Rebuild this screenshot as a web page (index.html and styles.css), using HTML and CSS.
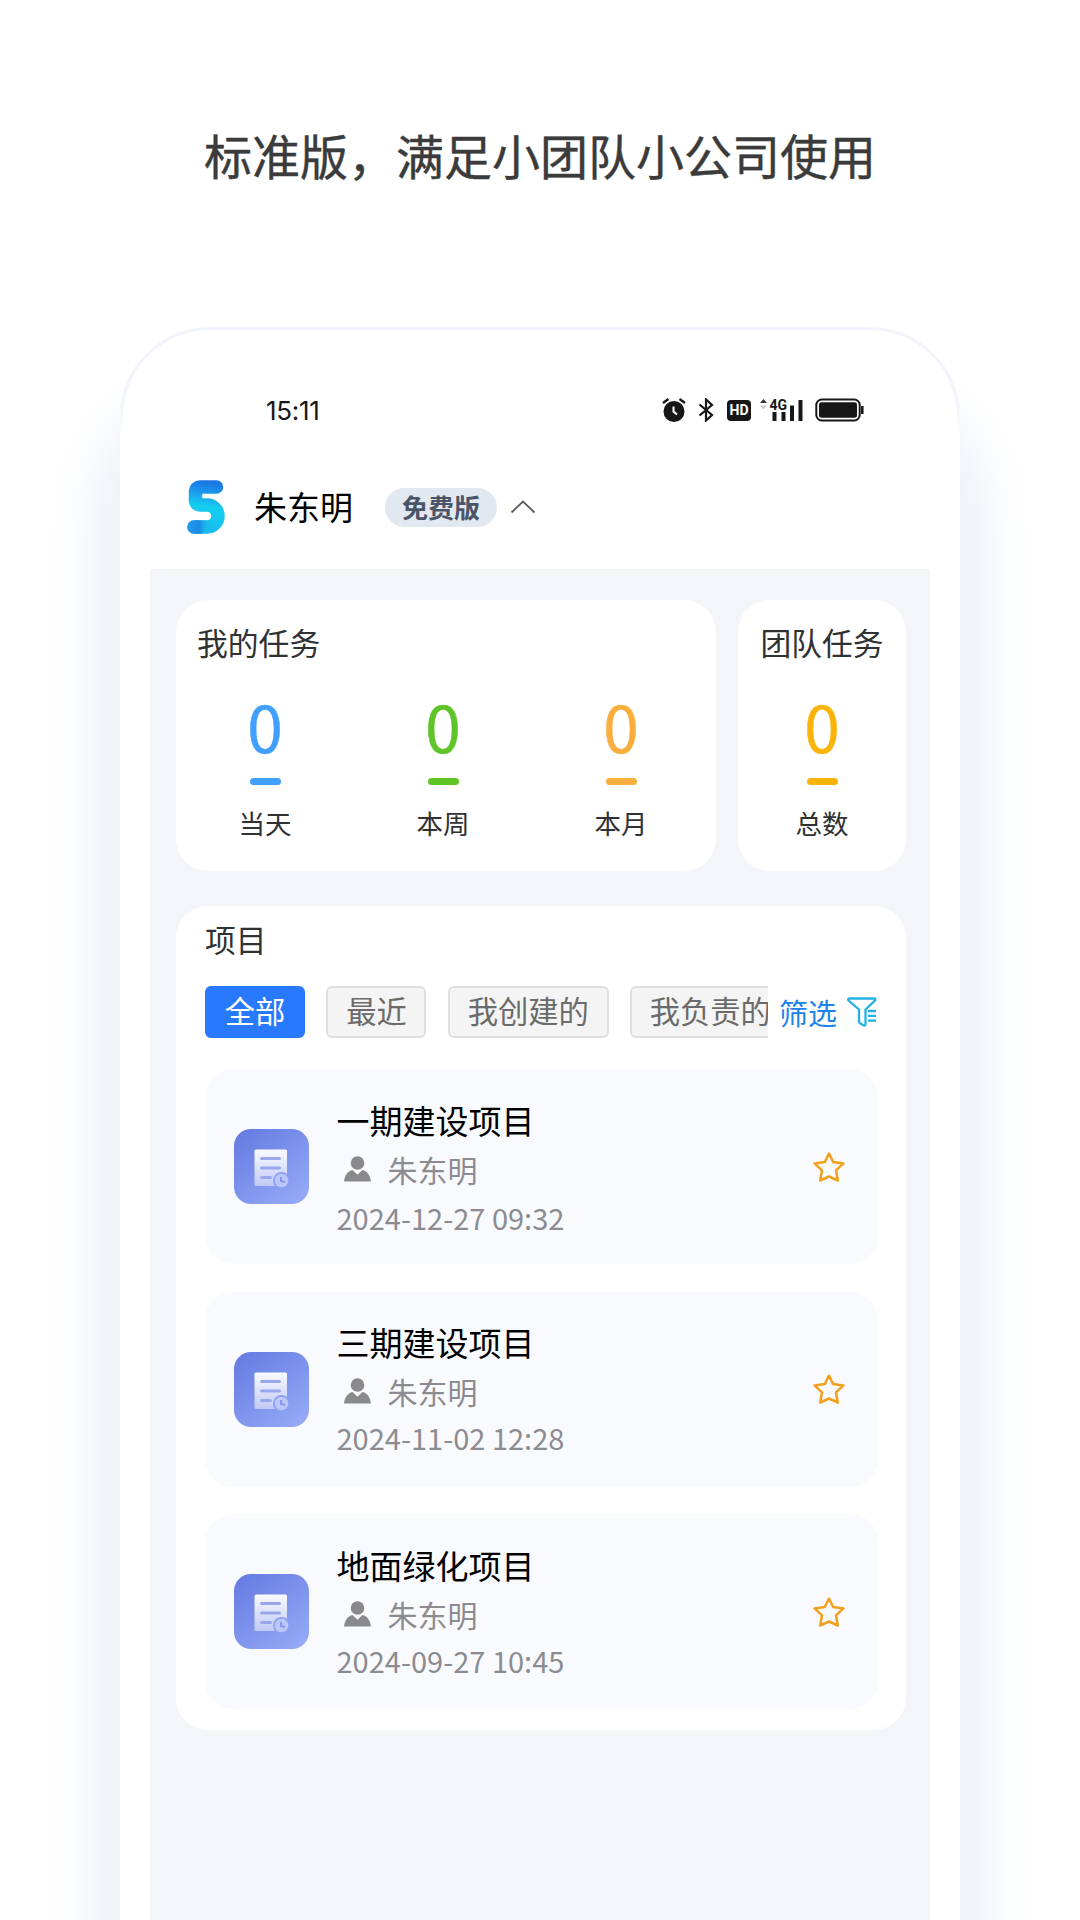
FILE: index.html
```html
<!DOCTYPE html>
<html lang="zh-CN">

<head>
    <meta charset="UTF-8">
    <meta name="viewport" content="width=device-width, initial-scale=1.0">
    <title>标准版</title>
    <link rel="stylesheet" href="styles.css">
</head>

<body>
    <!-- shared icons -->
    <svg class="sprite" width="0" height="0">
        <defs>
            <linearGradient id="fileBg" x1="0" y1="0" x2="0.8" y2="1">
                <stop offset="0" stop-color="#6379e0" />
                <stop offset="1" stop-color="#94a8f6" />
            </linearGradient>
            <linearGradient id="paper" x1="0" y1="0" x2="0" y2="1">
                <stop offset="0" stop-color="#fafbff" />
                <stop offset="1" stop-color="#c0c9f6" />
            </linearGradient>
            <linearGradient id="logoBg" gradientUnits="userSpaceOnUse" x1="26" y1="0" x2="18" y2="54">
                <stop offset="0.05" stop-color="#1b76e4" />
                <stop offset="0.25" stop-color="#1c98ee" />
                <stop offset="0.5" stop-color="#14cdee" />
                <stop offset="0.8" stop-color="#18c3ee" />
                <stop offset="1" stop-color="#16b8ec" />
            </linearGradient>
            <linearGradient id="logoTail" x1="0" y1="0" x2="1" y2="0">
                <stop offset="0" stop-color="#1f9cee" />
                <stop offset="0.5" stop-color="#1a88e2" />
                <stop offset="1" stop-color="#1ac0ec" stop-opacity="0" />
            </linearGradient>
        </defs>
        <symbol id="file" viewBox="0 0 75 75">
            <rect width="75" height="75" rx="17" fill="url(#fileBg)" />
            <rect x="20.500" y="20.500" width="32.500" height="36.500" rx="1.500" fill="url(#paper)" />
            <path d="M27.500 29.500h18M27.500 39h18M27.500 48.500h9" stroke="#9aa6ec" stroke-width="3" stroke-linecap="round" />
            <circle cx="47.500" cy="51.500" r="8.500" fill="#8da0f0" />
            <circle cx="47.500" cy="51.500" r="6.800" fill="#bcc7f9" />
            <path d="M47 48v4l4 1" fill="none" stroke="#8498ee" stroke-width="2" />
        </symbol>
        <symbol id="person" viewBox="0 0 27 26">
            <circle cx="13.500" cy="7" r="6.800" />
            <path d="M0 25.500C.8 19.500 3.500 15 8.500 14l5 4.800 5-4.800c5 1 7.700 5.500 8.500 11.500z" />
        </symbol>
        <symbol id="star" viewBox="0 0 32 32">
            <path d="M16 2.500l4.200 8.600 10.200 1.300-7.400 6.900 1.800 10.200L16 25.500l-8.800 4 1.800-10.200-7.400-6.900 10.200-1.300z" />
        </symbol>
    </svg>

    <h1 class="headline">标准版，满足小团队小公司使用</h1>

    <div class="phone">
        <div class="status-bar">
            <span class="time">15:11</span>
            <div class="status-icons">
                <svg width="24" height="24" viewBox="0 0 24 24">
                    <circle cx="12" cy="13.500" r="10.500" fill="#171717" />
                    <path d="M1 5l5.500-4M23 5l-5.500-4" stroke="#171717" stroke-width="2.400" />
                    <path d="M11.500 8.500v5l3.500 3" fill="none" stroke="#fff" stroke-width="2" />
                </svg>
                <svg width="16" height="24" viewBox="0 0 16 24">
                    <path d="M1.500 6.500L14 17l-6 5.500v-21L14 7 1.500 17.500" fill="none" stroke="#171717" stroke-width="2.200" />
                </svg>
                <span class="hd">HD</span>
                <svg class="signal" width="43" height="24" viewBox="0 0 43 24">
                    <path d="M0 5l3.500-4L7 5z" fill="#333" />
                    <path d="M0 7.500h7l-3.500 4z" fill="#ccc" />
                    <path d="M12.500 14h4v9h-4zM21.500 14h4v9h-4zM30 7.500h4V23h-4zM38.500 2h4v21h-4z" fill="#171717" />
                    <text x="9.500" y="12">4G</text>
                </svg>
                <svg width="49" height="24" viewBox="0 0 49 24">
                    <rect x="1.300" y="1.500" width="43.400" height="21" rx="5.500" fill="none" stroke="#171717" stroke-width="2" />
                    <rect x="4" y="4.200" width="38" height="15.600" rx="2.500" fill="#171717" />
                    <path d="M47.300 8v8" stroke="#171717" stroke-width="2.500" />
                </svg>
            </div>
        </div>

        <header class="user-bar">
            <svg class="logo" width="38" height="54" viewBox="0 0 38 54">
                <path d="M29.500 7H14Q8.500 7 8.500 12.500V20Q8.500 25 14 25H20a11 11 0 0 1 0 22H7" fill="none" stroke="url(#logoBg)" stroke-width="13.500" stroke-linecap="round" />
                <path d="M7 40.300H24L15 53.700H7a6.700 6.700 0 0 1 0-13.400z" fill="url(#logoTail)" />
            </svg>
            <span class="user-name">朱东明</span>
            <span class="badge">免费版</span>
            <svg class="chevron" width="26" height="14" viewBox="0 0 26 14">
                <path d="M1.500 12.500L13 1.500l11.500 11" fill="none" stroke="#5c5c5c" stroke-width="1.800" />
            </svg>
        </header>

        <main class="content">
            <div class="summary">
                <section class="card my-tasks">
                    <h2>我的任务</h2>
                    <div class="counts">
                        <div class="count blue"><b>0</b><i></i><span>当天</span></div>
                        <div class="count green"><b>0</b><i></i><span>本周</span></div>
                        <div class="count orange"><b>0</b><i></i><span>本月</span></div>
                    </div>
                </section>
                <section class="card team-tasks">
                    <h2>团队任务</h2>
                    <div class="counts">
                        <div class="count yellow"><b>0</b><i></i><span>总数</span></div>
                    </div>
                </section>
            </div>

            <section class="card projects">
                <h2>项目</h2>
                <div class="filter-row">
                    <div class="tabs">
                        <span class="tab active">全部</span>
                        <span class="tab">最近</span>
                        <span class="tab">我创建的</span>
                        <span class="tab">我负责的</span>
                    </div>
                    <span class="filter">筛选</span>
                    <svg class="funnel" width="30" height="30" viewBox="0 0 30 30">
                        <path d="M3 1.500h24q2 0 1 2l-9.500 9V27q0 2-2 1.300l-3.500-2q-1-.6-1-2V12.500L1.500 3.500q-1-2 1.500-2z" />
                        <path d="M21 14h8M21 18.800h8M21 23.600h8" />
                    </svg>
                </div>

                <div class="project">
                    <svg class="file-icon"><use href="#file" /></svg>
                    <div class="info">
                        <h3>一期建设项目</h3>
                        <div class="owner"><svg><use href="#person" /></svg>朱东明</div>
                        <div class="date date-low">2024-12-27 09:32</div>
                    </div>
                    <svg class="star"><use href="#star" /></svg>
                </div>
                <div class="project">
                    <svg class="file-icon"><use href="#file" /></svg>
                    <div class="info">
                        <h3>三期建设项目</h3>
                        <div class="owner"><svg><use href="#person" /></svg>朱东明</div>
                        <div class="date">2024-11-02 12:28</div>
                    </div>
                    <svg class="star"><use href="#star" /></svg>
                </div>
                <div class="project">
                    <svg class="file-icon"><use href="#file" /></svg>
                    <div class="info">
                        <h3>地面绿化项目</h3>
                        <div class="owner"><svg><use href="#person" /></svg>朱东明</div>
                        <div class="date">2024-09-27 10:45</div>
                    </div>
                    <svg class="star"><use href="#star" /></svg>
                </div>
            </section>
        </main>
    </div>
</body>

</html>
```
FILE: styles.css
```css
:root {
    --primary-color: #2979ff;
    --page-color: #f4f5f9;
    --item-color: #f9fafe;
    --text-color: #303133;
    --muted-color: #8c8c90;
}

* {
    box-sizing: border-box;
}

body {
    margin: 0;
    height: 1920px;
    overflow: hidden;
    background-color: #fff;
    color: var(--text-color);
    font-family: "Noto Sans CJK SC", sans-serif;
}

h1,
h2,
h3 {
    margin: 0;
    font-weight: 400;
}

svg {
    display: block;
    flex: none;
}

.sprite {
    position: absolute;
}

.headline {
    padding-top: 118px;
    height: 327px;
    font-size: 48px;
    line-height: 72px;
    text-align: center;
    color: #3b3b3b;
    -webkit-text-stroke: 0.4px #3b3b3b;
}

.phone {
    width: 840px;
    height: 1593px;
    margin: 0 auto;
    padding: 60px 27px 0;
    border: 3px solid transparent;
    border-bottom: none;
    border-radius: 90px 90px 0 0;
    /* the outline fades out below the rounded corners */
    background: linear-gradient(#fff, #fff) padding-box, linear-gradient(#f1f4fb 80px, #fff 110px) border-box;
    box-shadow: 0 90px 50px 30px #eef2f7;
}

/* status bar */
.status-bar {
    display: flex;
    align-items: center;
    justify-content: space-between;
    height: 40px;
    padding: 0 66px 0 116px;
}

.time {
    font-family: Inter, sans-serif;
    font-size: 26px;
    letter-spacing: -0.3px;
    color: #171717;
}

.status-icons {
    display: flex;
    align-items: center;
}

.status-icons svg + svg {
    margin-left: 12px;
}

.hd {
    width: 24px;
    height: 21px;
    margin: 1px 9px 0 13px;
    border-radius: 4px;
    background-color: #171717;
    color: #fff;
    font: bold 14px/21px Roboto, sans-serif;
    text-align: center;
}

.signal text {
    font: bold 14px Roboto, sans-serif;
    fill: #171717;
    stroke: #fff;
    stroke-width: 2px;
    paint-order: stroke;
}

/* user bar */
.user-bar {
    display: flex;
    align-items: center;
    height: 60px;
    margin: 47px 0 32px;
    padding-left: 37px;
}

.user-name {
    margin-left: 29px;
    padding-bottom: 2px;
    font-size: 33px;
    line-height: 48px;
    color: #000;
}

.badge {
    width: 112px;
    height: 39px;
    margin-left: 32px;
    border-radius: 20px;
    background-color: #e2e8f0;
    color: #4a5568;
    font-size: 26px;
    font-weight: 700;
    line-height: 37px;
    text-align: center;
}

.chevron {
    margin-left: 13px;
}

/* content */
.content {
    height: 1351px;
    padding: 31px 24px 0 26px;
    background-color: var(--page-color);
}

.card {
    border-radius: 32px;
    background-color: #fff;
}

.card h2 {
    padding-bottom: 1px;
    font-size: 30.800px;
    line-height: 43px;
}

.summary {
    display: flex;
    justify-content: space-between;
    height: 271px;
    margin-bottom: 35px;
}

.my-tasks {
    width: 540px;
    padding: 20px 6px 0 0;
}

.team-tasks {
    width: 168px;
    padding-top: 20px;
}

.my-tasks h2 {
    padding-left: 21px;
}

.team-tasks h2 {
    text-align: center;
}

.counts {
    display: flex;
}

.count {
    flex: 1;
    display: flex;
    flex-direction: column;
    align-items: center;
}

.count b {
    margin-top: 13px;
    font-size: 64px;
    font-weight: 400;
    line-height: 96px;
    -webkit-text-stroke: 0.5px currentColor;
}

.count i {
    width: 31px;
    height: 7px;
    margin-top: 5px;
    border-radius: 4px;
    background-color: currentColor;
}

.count span {
    margin-top: 18px;
    font-size: 26.500px;
    line-height: 40px;
    color: var(--text-color);
}

.blue {
    color: #419fff;
}

.green {
    color: #5ec428;
}

.orange {
    color: #f9ae3d;
}

.yellow {
    color: #fab409;
}

/* projects */
.projects {
    height: 824px;
    padding: 11px 28px 0 29px;
}

.filter-row {
    display: flex;
    align-items: center;
    height: 53px;
    margin: 24px 0 31px;
}

.tabs {
    display: flex;
    flex: none;
    gap: 21.500px;
    width: 563px;
    overflow: hidden;
}

.tab {
    flex: none;
    height: 52px;
    padding: 0 17.700px;
    border: 2px solid #dfdfdf;
    border-radius: 6px;
    background-color: #f4f4f4;
    color: #6b6b6b;
    font-size: 30.300px;
    line-height: 44px;
}

.tab.active {
    border-color: var(--primary-color);
    background-color: var(--primary-color);
    color: #fff;
}

.filter {
    margin-left: 11px;
    font-size: 29px;
    line-height: 42px;
    color: #1b84ea;
}

.funnel {
    margin-left: 10px;
    fill: none;
    stroke: #25b2e2;
    stroke-width: 2.300;
}

.project {
    display: flex;
    align-items: center;
    height: 195px;
    margin-bottom: 27.500px;
    padding: 0 33px 0 29px;
    border-radius: 28px;
    background-color: var(--item-color);
}

.file-icon {
    width: 75px;
    height: 75px;
}

.info {
    flex: 1;
    padding-left: 27.500px;
}

.info h3 {
    font-size: 33px;
    line-height: 48px;
    color: #000;
}

.owner {
    display: flex;
    align-items: center;
    padding-top: 1px;
    font-size: 30px;
    line-height: 48px;
    color: var(--muted-color);
}

.owner svg {
    width: 27px;
    height: 26px;
    margin: 0 17px 0 7px;
    fill: #8a8a8d;
}

.date {
    font-size: 29px;
    line-height: 45px;
    color: var(--muted-color);
}

.date-low {
    padding-top: 2px;
    margin-bottom: -2px;
}

.star {
    width: 32px;
    height: 32px;
    fill: none;
    stroke: #f3a01c;
    stroke-width: 2.500;
    stroke-linejoin: round;
}
```
